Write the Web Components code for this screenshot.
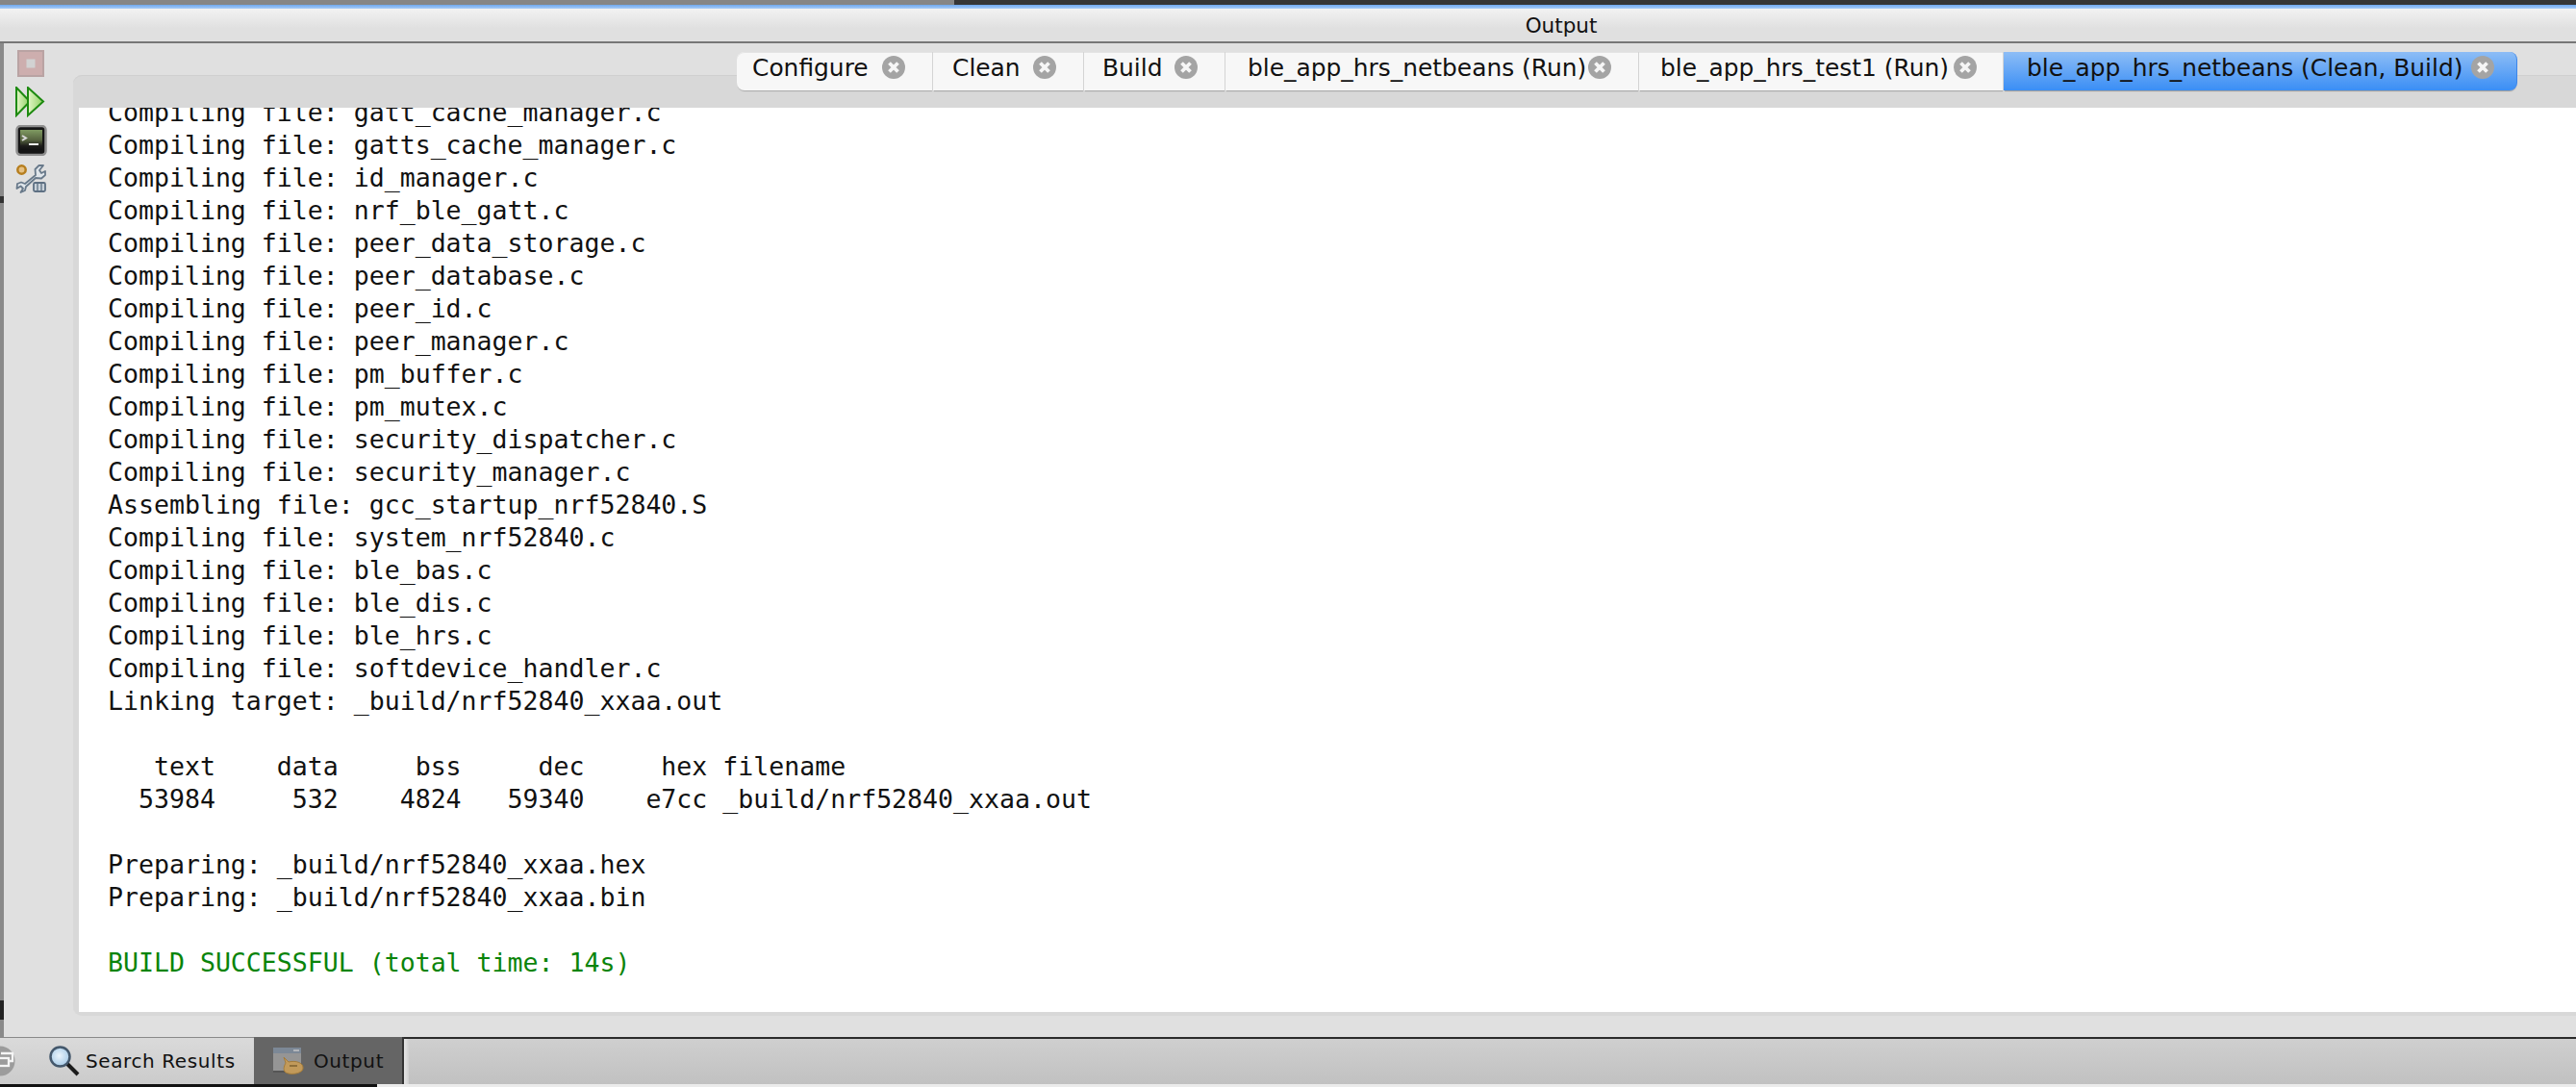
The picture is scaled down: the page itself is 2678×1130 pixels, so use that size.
<!DOCTYPE html>
<html>
<head>
<meta charset="utf-8">
<title>Output</title>
<style>
    html, body { margin: 0; height: 100%; overflow: hidden; background: #e0e0e0; }
    body { display: flex; flex-direction: column; height: 1130px; font-family: "DejaVu Sans", sans-serif; }
</style>
</head>
<body>
<ide-titlebar>Output</ide-titlebar>
<ide-workspace>
    <ide-toolbar></ide-toolbar>
    <output-panel>
        <output-tab slot="tabs" style="--w:204px;--pad:16px">Configure</output-tab>
        <output-tab slot="tabs" style="--w:157px;--pad:20px">Clean</output-tab>
        <output-tab slot="tabs" style="--w:147px;--pad:19px">Build</output-tab>
        <output-tab slot="tabs" style="--w:430px;--pad:23px;--right:28px">ble_app_hrs_netbeans (Run)</output-tab>
        <output-tab slot="tabs" style="--w:379px;--pad:22px;--right:27px">ble_app_hrs_test1 (Run)</output-tab>
        <output-tab slot="tabs" active style="--w:534px;--pad:24px;--right:23px">ble_app_hrs_netbeans (Clean, Build)</output-tab>
        <console-log></console-log>
    </output-panel>
</ide-workspace>
<ide-statusbar></ide-statusbar>

<script>
class IdeTitlebar extends HTMLElement {
    constructor() {
        super();
        this.attachShadow({ mode: "open" }).innerHTML = /*html*/`
        <style>
            :host { display: block; flex: none; height: 45px; }
            .top { display: flex; height: 5px; }
            .top i { display: block; width: 992px; background: #868686; }
            .top b { display: block; flex: 1; background: #363636; }
            .blue { height: 4px; background: linear-gradient(#6fa8ee, #a9cdf7); }
            .bar {
                height: 34px;
                display: flex;
                align-items: center;
                justify-content: center;
                padding-left: 568px;
                font-size: 21.5px;
                color: #111;
                background: linear-gradient(#f2f2f2, #e0e0e0 60%);
            }
            .line { height: 2px; background: #777; }
        </style>
        <div class="top"><i></i><b></b></div>
        <div class="blue"></div>
        <div class="bar"><slot></slot></div>
        <div class="line"></div>`;
    }
}

class IdeWorkspace extends HTMLElement {
    constructor() {
        super();
        this.attachShadow({ mode: "open" }).innerHTML = /*html*/`
        <style>
            :host { display: flex; flex: 1; min-height: 0; background: #e0e0e0; }
            .edge {
                width: 4px;
                flex: none;
                background: linear-gradient(#8a8a8a 159px, #333 159px, #333 166px, #8a8a8a 166px, #8a8a8a 995px, #222 995px, #222 1015px, #8a8a8a 1015px);
            }
        </style>
        <div class="edge"></div>
        <slot></slot>`;
    }
}

class IdeToolbar extends HTMLElement {
    constructor() {
        super();
        this.attachShadow({ mode: "open" }).innerHTML = /*html*/`
        <style>
            :host { display: flex; flex-direction: column; flex: none; width: 72px; padding: 7px 0 0 12px; box-sizing: border-box; }
            svg { display: block; flex: none; }
        </style>
        <svg width="32" height="30" viewBox="0 0 32 30" style="margin-left:2px">
            <rect x="1" y="1" width="26" height="26" fill="#cdaeae" stroke="#b9a3a3" stroke-width="2"/>
            <rect x="9.500" y="9.500" width="9" height="9" fill="#d2d2d2"/>
        </svg>
        <svg width="32" height="32" viewBox="0 0 32 32" style="margin-top:8px">
            <defs><linearGradient id="pl" x1="0" x2="1" y1="0" y2="0"><stop offset="0" stop-color="#e2f6c6"/><stop offset="1" stop-color="#8fd063"/></linearGradient></defs>
            <path d="M1 1 L15 15.500 L1 30 Z" fill="url(#pl)" stroke="#1d8a10" stroke-width="2"/>
            <path d="M13 1 L29 15.500 L13 30 Z" fill="url(#pl)" stroke="#1d8a10" stroke-width="2"/>
        </svg>
        <svg width="33" height="32" viewBox="0 0 33 32" style="margin-top:8px">
            <defs><linearGradient id="tm" x1="0" x2="0" y1="0" y2="1"><stop offset="0" stop-color="#7f9a62"/><stop offset=".5" stop-color="#56633f"/><stop offset=".8" stop-color="#1c1c1a"/><stop offset="1" stop-color="#111"/></linearGradient></defs>
            <rect x="1.500" y="1" width="30" height="30" rx="4" fill="#161616" stroke="#8f8f8f" stroke-width="2.500"/>
            <rect x="5" y="5" width="23" height="21" fill="url(#tm)"/>
            <path d="M7 11 L11 13.500 L7 16" fill="none" stroke="#d8d8d8" stroke-width="2"/>
            <rect x="14" y="19" width="10" height="2" fill="#eee"/>
        </svg>
        <svg width="33" height="32" viewBox="0 0 33 32" style="margin-top:8px">
            <circle cx="6.500" cy="6.500" r="4.200" fill="#e5c083" stroke="#b67e1e" stroke-width="2.500"/>
            <path d="M1.500 26 L2 21 L6 19.500 L10 21 L21 12 L20.500 6 L24.500 2 L29 2 L25 7 L27 10 L31 8 L31 12 L27 15.500 L21 15 L11 24 L10 28 L5.500 30 L8 26 L5.500 23.500 Z" fill="#dfe5ea" stroke="#68798a" stroke-width="1.800" stroke-linejoin="round"/>
            <rect x="19" y="20" width="12" height="9" rx="1.500" fill="#c9d2da" stroke="#5e7083" stroke-width="1.800"/>
            <path d="M23 21 V28 M27 21 V28" stroke="#5e7083" stroke-width="1.300"/>
        </svg>`;
    }
}

class OutputPanel extends HTMLElement {
    constructor() {
        super();
        this.attachShadow({ mode: "open" }).innerHTML = /*html*/`
        <style>
            :host {
                display: flex;
                flex-direction: column;
                flex: 1;
                min-width: 0;
                margin: 33px 0 22px 0;
                padding-left: 6px;
                padding-bottom: 4px;
                background: #d8d8d8;
                border-top-left-radius: 9px;
                border-bottom-left-radius: 9px;
                box-shadow: inset 0 1px 0 #d0d0d0;
            }
            .tabs { display: flex; flex: none; height: 40px; margin: -24px 0 18px 684px; }
            .tabs ::slotted(output-tab:first-child) { border-radius: 8px 0 0 8px; }
            .tabs ::slotted(output-tab:last-of-type) { border-radius: 0 8px 8px 0; }
        </style>
        <div class="tabs"><slot name="tabs"></slot></div>
        <slot></slot>`;
    }
}

class OutputTab extends HTMLElement {
    constructor() {
        super();
        this.attachShadow({ mode: "open" }).innerHTML = /*html*/`
        <style>
            :host {
                display: flex;
                align-items: center;
                flex: none;
                box-sizing: border-box;
                width: var(--w);
                height: 40px;
                padding: 0 var(--right, 28px) 8px var(--pad);
                font-size: 24.9px;
                white-space: nowrap;
                color: #111;
                background: #f7f7f7;
                border-right: 1px solid #d4d4d4;
                box-shadow: 0 2px 1px -1px #aaa, inset 0 1px 0 #e4e4e4;
            }
            :host([active]) {
                background: linear-gradient(#8dbdf6, #3a8ef5);
                border-right: 1px solid #3c86ea;
                box-shadow: 0 2px 1px -1px #999;
            }
            .x { margin-left: auto; flex: none; display: block; }
        </style>
        <slot></slot>
        <svg class="x" width="24" height="24" viewBox="0 0 24 24">
            <circle cx="12" cy="12" r="12" fill="#a4a4a4"/>
            <path d="M7.500 7.500 L16.500 16.500 M16.500 7.500 L7.500 16.500" stroke="#f6f6f6" stroke-width="3.800"/>
        </svg>`;
    }
}

const LOG = [
    "Compiling file: gatt_cache_manager.c",
    "Compiling file: gatts_cache_manager.c",
    "Compiling file: id_manager.c",
    "Compiling file: nrf_ble_gatt.c",
    "Compiling file: peer_data_storage.c",
    "Compiling file: peer_database.c",
    "Compiling file: peer_id.c",
    "Compiling file: peer_manager.c",
    "Compiling file: pm_buffer.c",
    "Compiling file: pm_mutex.c",
    "Compiling file: security_dispatcher.c",
    "Compiling file: security_manager.c",
    "Assembling file: gcc_startup_nrf52840.S",
    "Compiling file: system_nrf52840.c",
    "Compiling file: ble_bas.c",
    "Compiling file: ble_dis.c",
    "Compiling file: ble_hrs.c",
    "Compiling file: softdevice_handler.c",
    "Linking target: _build/nrf52840_xxaa.out",
    "",
    "   text    data     bss     dec     hex filename",
    "  53984     532    4824   59340    e7cc _build/nrf52840_xxaa.out",
    "",
    "Preparing: _build/nrf52840_xxaa.hex",
    "Preparing: _build/nrf52840_xxaa.bin",
    ""
];

class ConsoleLog extends HTMLElement {
    constructor() {
        super();
        const root = this.attachShadow({ mode: "open" });
        root.innerHTML = /*html*/`
        <style>
            :host { display: block; flex: 1; min-height: 0; overflow: hidden; background: #fff; }
            pre {
                margin: -12px 0 0 0;
                padding-left: 30px;
                font: 26.55px/34px "DejaVu Sans Mono", monospace;
                color: #111;
            }
            .ok { color: #0a840a; }
        </style>
        <pre></pre>`;
        const pre = root.querySelector("pre");
        pre.textContent = LOG.join("\n") + "\n";
        const ok = document.createElement("span");
        ok.className = "ok";
        ok.textContent = "BUILD SUCCESSFUL (total time: 14s)";
        pre.append(ok);
    }
}

class IdeStatusbar extends HTMLElement {
    constructor() {
        super();
        this.attachShadow({ mode: "open" }).innerHTML = /*html*/`
        <style>
            :host {
                display: flex;
                flex: none;
                height: 52px;
                box-sizing: border-box;
                border-top: 2px solid #2b2b2b;
                padding-bottom: 3px;
                background:
                    linear-gradient(90deg, #111 392px, #ebebeb 392px) bottom / 100% 3px no-repeat,
                    linear-gradient(#cfcfcf, #c0c0c0);
                font-size: 20px;
                color: #111;
                letter-spacing: .6px;
            }
            .search {
                display: flex;
                align-items: center;
                width: 264px;
                margin-top: -2px;
                box-sizing: border-box;
                border-top: 1px solid #8a8a8a;
                background: linear-gradient(#dadada, #cbcbcb);
                overflow: hidden;
            }
            .restore { flex: none; margin-left: -16px; display: block; }
            .search .lens { flex: none; margin-left: 29px; display: block; }
            .search span { margin-left: 6px; }
            .out {
                display: flex;
                align-items: center;
                width: 154px;
                margin-top: -2px;
                box-sizing: border-box;
                padding-left: 20px;
                background: #656565;
            }
            .out span { margin-left: 10px; }
            .out svg { flex: none; display: block; }
            .sep { width: 2px; background: #333; margin-top: -2px; }
            .glow { width: 5px; background: linear-gradient(90deg, #e6e6e6, #d0d0d0); }
        </style>
        <div class="search">
            <svg class="restore" width="38" height="32" viewBox="0 0 38 32">
                <circle cx="16" cy="16" r="15.500" fill="#9c9c9c"/>
                <path d="M17 8 H29 V16 H25" fill="none" stroke="#f5f5f5" stroke-width="2.300"/>
                <rect x="13" y="13" width="12" height="8" fill="none" stroke="#f5f5f5" stroke-width="2.300"/>
            </svg>
            <svg class="lens" width="32" height="32" viewBox="0 0 32 32">
                <defs><radialGradient id="gl" cx=".45" cy=".45" r=".6"><stop offset="0" stop-color="#eaf4fc"/><stop offset="1" stop-color="#a3c8e6"/></radialGradient></defs>
                <path d="M19 19 L30 30" stroke="#1c1c1c" stroke-width="4"/>
                <circle cx="11.500" cy="11.500" r="10" fill="url(#gl)" stroke="#44586c" stroke-width="2.500"/>
            </svg>
            <span>Search Results</span>
        </div>
        <div class="out">
            <svg width="32" height="31" viewBox="0 0 32 31">
                <rect x="0" y="2" width="29" height="25" fill="#959595"/>
                <rect x="0" y="2" width="29" height="6" fill="#7c8896"/>
                <path d="M21 5 H27" stroke="#c4c4c4" stroke-width="1.500"/>
                <path d="M0 27 H29" stroke="#555" stroke-width="2"/>
                <path d="M11 12 L16 17 C24 15 32 18 31 24 C30 30 15 31 12 27 C10 24 12 20 13 18 Z" fill="#c29a5a" stroke="#a37b3a" stroke-width="1"/>
                <path d="M17 21 H25" stroke="#7d6030" stroke-width="1.500"/>
            </svg>
            <span>Output</span>
        </div>
        <div class="sep"></div>
        <div class="glow"></div>`;
    }
}

customElements.define("ide-titlebar", IdeTitlebar);
customElements.define("ide-workspace", IdeWorkspace);
customElements.define("ide-toolbar", IdeToolbar);
customElements.define("output-panel", OutputPanel);
customElements.define("output-tab", OutputTab);
customElements.define("console-log", ConsoleLog);
customElements.define("ide-statusbar", IdeStatusbar);
</script>
</body>
</html>
